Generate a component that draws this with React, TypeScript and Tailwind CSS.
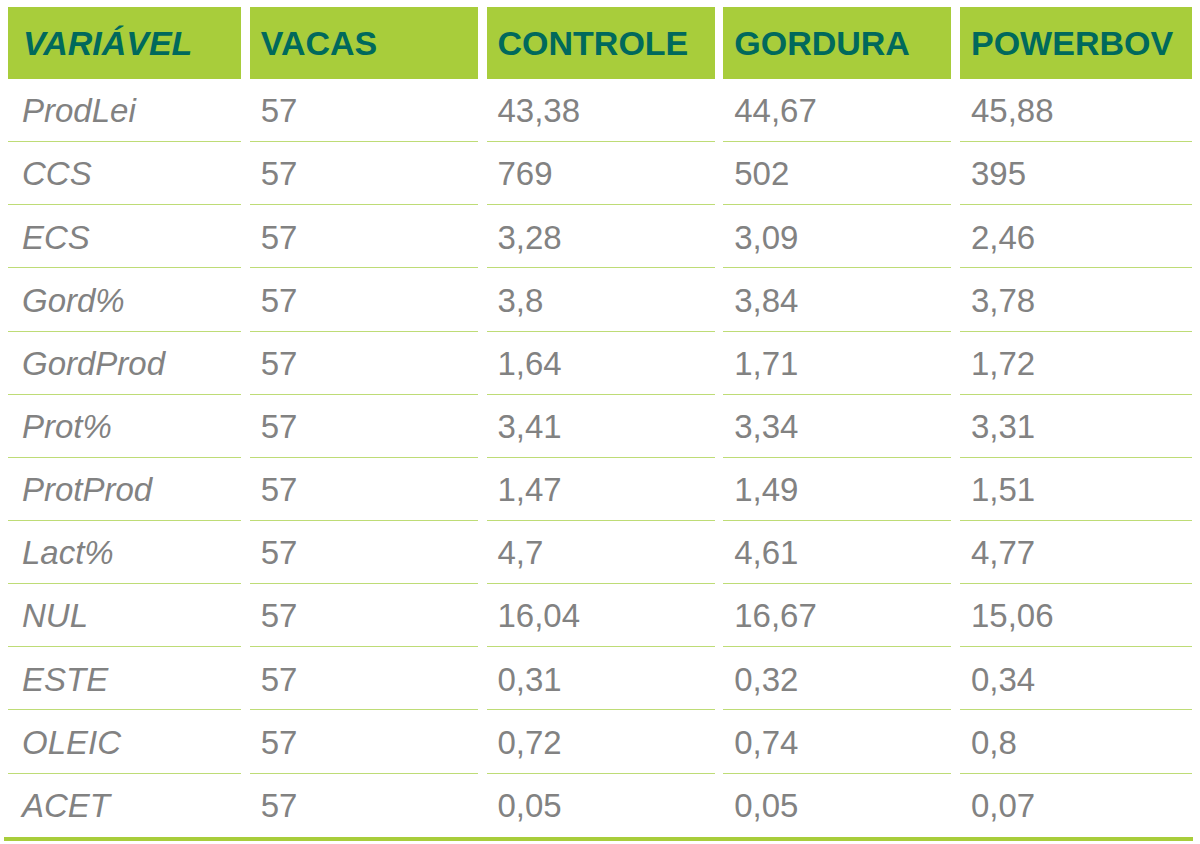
const headers = ["VARIÁVEL", "VACAS", "CONTROLE", "GORDURA", "POWERBOV"];

const rows: string[][] = [
  ["ProdLei", "57", "43,38", "44,67", "45,88"],
  ["CCS", "57", "769", "502", "395"],
  ["ECS", "57", "3,28", "3,09", "2,46"],
  ["Gord%", "57", "3,8", "3,84", "3,78"],
  ["GordProd", "57", "1,64", "1,71", "1,72"],
  ["Prot%", "57", "3,41", "3,34", "3,31"],
  ["ProtProd", "57", "1,47", "1,49", "1,51"],
  ["Lact%", "57", "4,7", "4,61", "4,77"],
  ["NUL", "57", "16,04", "16,67", "15,06"],
  ["ESTE", "57", "0,31", "0,32", "0,34"],
  ["OLEIC", "57", "0,72", "0,74", "0,8"],
  ["ACET", "57", "0,05", "0,05", "0,07"],
];

export default function App() {
  return (
    <div className="w-[1200px] h-[844px] bg-white pt-[7px] font-['Liberation_Sans',Arial,sans-serif] overflow-hidden">
      <div className="pl-2 w-[1193px]">
        <div className="grid grid-cols-[233px_228px_228px_228px_232px] gap-x-[8.75px]">
          {headers.map((h, i) => (
            <div
              key={h}
              className={`h-[72px] bg-[#a8cd3b] flex items-center text-[#00695c] text-[34px] font-bold ${
                i === 0 ? "italic pl-[15px]" : "pl-[11px]"
              }`}
            >
              {h}
            </div>
          ))}
          {rows.map((r, ri) =>
            r.map((c, ci) => (
              <div
                key={ri + "-" + ci}
                className={`h-[63.15px] pt-[2px] flex items-center text-[33px] text-[#828282] ${
                  ci === 0 ? "italic pl-[14px]" : "pl-[11px]"
                } ${ri < rows.length - 1 ? "border-b-[1.5px] border-[#bedc76]" : ""}`}
              >
                {c}
              </div>
            ))
          )}
        </div>
        <div className="h-[4px] bg-[#a8cd3b] -ml-1"></div>
      </div>
    </div>
  );
}
